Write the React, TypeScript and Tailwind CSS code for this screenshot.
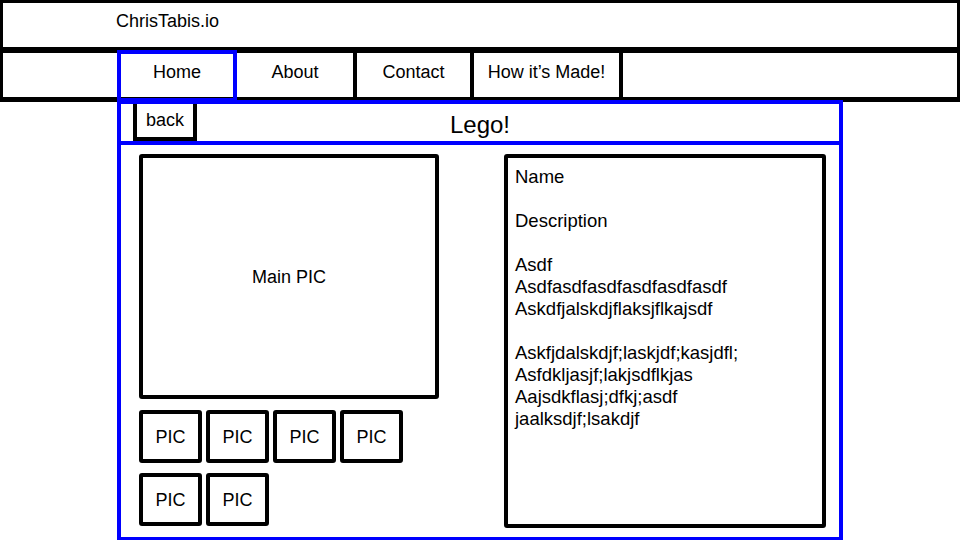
import React from 'react';

const navItems = [
  { label: 'About', className: 'w-[120px] pt-[8px]' },
  { label: 'Contact', className: 'w-[117px] pt-[8px]' },
  { label: "How it’s Made!", className: 'w-[149px] pt-[8px]' },
];

const detailLines = [
  'Name',
  '',
  'Description',
  '',
  'Asdf',
  'Asdfasdfasdfasdfasdfasdf',
  'Askdfjalskdjflaksjflkajsdf',
  '',
  'Askfjdalskdjf;laskjdf;kasjdfl;',
  'Asfdkljasjf;lakjsdflkjas',
  'Aajsdkflasj;dfkj;asdf',
  'jaalksdjf;lsakdjf',
];

const Thumb: React.FC = () => (
  <div className="w-[63px] h-[53px] border-4 border-black rounded-[3px] flex items-center justify-center">
    PIC
  </div>
);

const App: React.FC = () => {
  return (
    <div className="w-[960px] h-[540px] overflow-hidden bg-white text-black text-[18px] leading-[22px] font-['Liberation_Sans',Arial,sans-serif]">
      {/* site header */}
      <div className="h-[50px] border-[3px] border-black pl-[113px] pt-[7px]">ChrisTabis.io</div>

      {/* nav */}
      <div className="flex h-[52px] border-x-[3px] border-t-[3px] border-b-[5px] border-black">
        <div className="w-[114px]" />
        <div className="relative z-10 w-[120px] -mt-[3px] -mb-[5px] border-4 border-[#0000ff] pt-[7px] text-center">Home</div>
        {navItems.map((item) => (
          <div key={item.label} className={`${item.className} border-r-4 border-black text-center`}>
            {item.label}
          </div>
        ))}
        <div className="flex-1" />
      </div>

      {/* page */}
      <div className="relative z-20 ml-[117px] w-[726px]">
        <div className="h-[41px] -mt-[2px] border-x-4 border-t-4 border-[#0000ff] bg-white grid grid-cols-[1fr_auto_1fr]">
          <div className="flex">
            <div className="ml-[12px] w-[64px] border-x-4 border-b-4 border-black pt-[5px] text-center">back</div>
          </div>
          <div className="pt-[7px] text-[24px] leading-[28px]">Lego!</div>
          <div />
        </div>

        <div className="h-[400px] border-4 border-[#0000ff] flex pl-[18px] pt-[9px]">
          <div className="w-[300px]">
            <div className="h-[245px] border-4 border-black rounded-[3px] flex items-center justify-center">Main PIC</div>
            <div className="mt-[11px] flex flex-col gap-[10px]">
              <div className="flex gap-[4px]">
                <Thumb />
                <Thumb />
                <Thumb />
                <Thumb />
              </div>
              <div className="flex gap-[4px]">
                <Thumb />
                <Thumb />
              </div>
            </div>
          </div>

          <div className="ml-[65px] w-[322px] h-[374px] border-4 border-black rounded-[3px] pl-[7px] pt-[8px] text-[18.5px]">
            {detailLines.map((line, i) => (
              <div key={i} className="h-[22px] whitespace-nowrap">{line}</div>
            ))}
          </div>
        </div>
      </div>
    </div>
  );
};

export default App;
